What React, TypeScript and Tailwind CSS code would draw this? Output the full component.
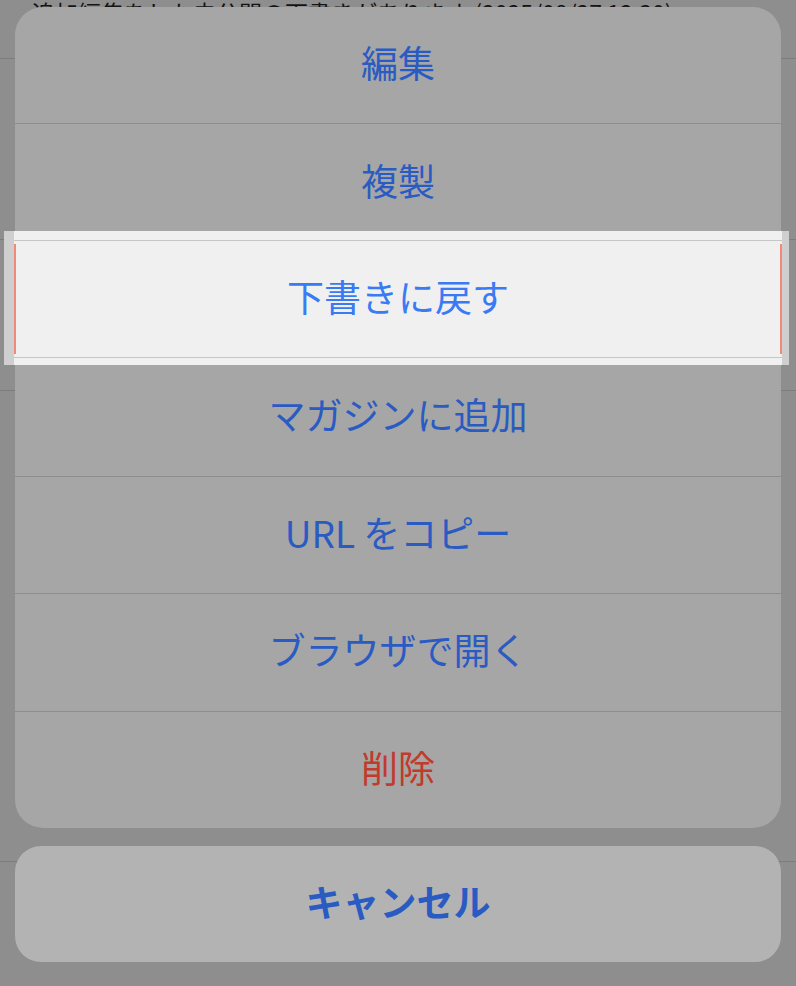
// App.tsx
// iOS-style action sheet over a dimmed article list.

const FONT = { fontFamily: '"Noto Sans CJK JP", "Noto Sans", sans-serif' }

const items: { label: string; tone: 'blue' | 'red' }[] = [
  { label: '編集', tone: 'blue' },
  { label: '複製', tone: 'blue' },
  { label: '下書きに戻す', tone: 'blue' },
  { label: 'マガジンに追加', tone: 'blue' },
  { label: 'URL をコピー', tone: 'blue' },
  { label: 'ブラウザで開く', tone: 'blue' },
  { label: '削除', tone: 'red' },
]

export default function App() {
  return (
    <div className="relative w-[796px] h-[986px] overflow-hidden bg-[#8e8e8e]" style={FONT}>
      {/* ── dimmed page behind ── */}
      <div className="flex flex-col">
        <div className="h-[59px] border-b border-[#7c7c7c] pl-[32px]">
          <p className="text-[23px] leading-none text-[#141414] whitespace-nowrap pt-[1px]">
            追加編集をした未公開の下書きがあります (2025/08/27 12:30)
          </p>
        </div>
        <div className="h-[181px] border-b border-[#7c7c7c]" />
        <div className="h-[151px] border-b border-[#7c7c7c]" />
        <div className="h-[471px] border-b border-[#7c7c7c] flex items-end pl-[60px]">
          <p className="text-[22px] leading-none text-[#141414] tracking-[6px] mb-[-8px]">
            2025/08/27
          </p>
        </div>
      </div>

      {/* ── action sheet ── */}
      <div className="absolute left-[15px] top-[7px] w-[766px] flex flex-col gap-[18px]">
        <div className="h-[821px] rounded-[28px] bg-[#a6a6a6] overflow-hidden flex flex-col divide-y divide-[#8d8d8d]">
          {items.map((it) => (
            <div key={it.label} className="flex-1 flex items-center justify-center pb-[5px]">
              <span
                className={
                  'text-[37px] leading-none ' +
                  (it.tone === 'red' ? 'text-[#c13a2c]' : 'text-[#2a5bc2]')
                }
              >
                {it.label}
              </span>
            </div>
          ))}
        </div>
        <div className="h-[116px] rounded-[26px] bg-[#b3b3b3] flex items-center justify-center pb-[5px]">
          <span className="text-[37px] leading-none font-bold text-[#2a5bc2]">キャンセル</span>
        </div>
      </div>

      {/* ── pressed row highlight ── */}
      <div className="absolute left-[4px] top-[231px] w-[785px] h-[134px] bg-[#cfcfcf]">
        <div className="ml-[10px] w-[768px] h-full bg-[#eff0ef] flex flex-col">
          <div className="h-[9px]" />
          <div className="flex-1 border-y border-[#c6c6c6] flex items-stretch py-[3px]">
            <div className="w-[2px] bg-[#f28a78]" />
            <div className="flex-1 flex items-center justify-center pb-[5px]">
              <span className="text-[37px] leading-none text-[#3a7af4]">下書きに戻す</span>
            </div>
            <div className="w-[2px] bg-[#f28a78]" />
          </div>
          <div className="h-[7px]" />
        </div>
      </div>
    </div>
  )
}
